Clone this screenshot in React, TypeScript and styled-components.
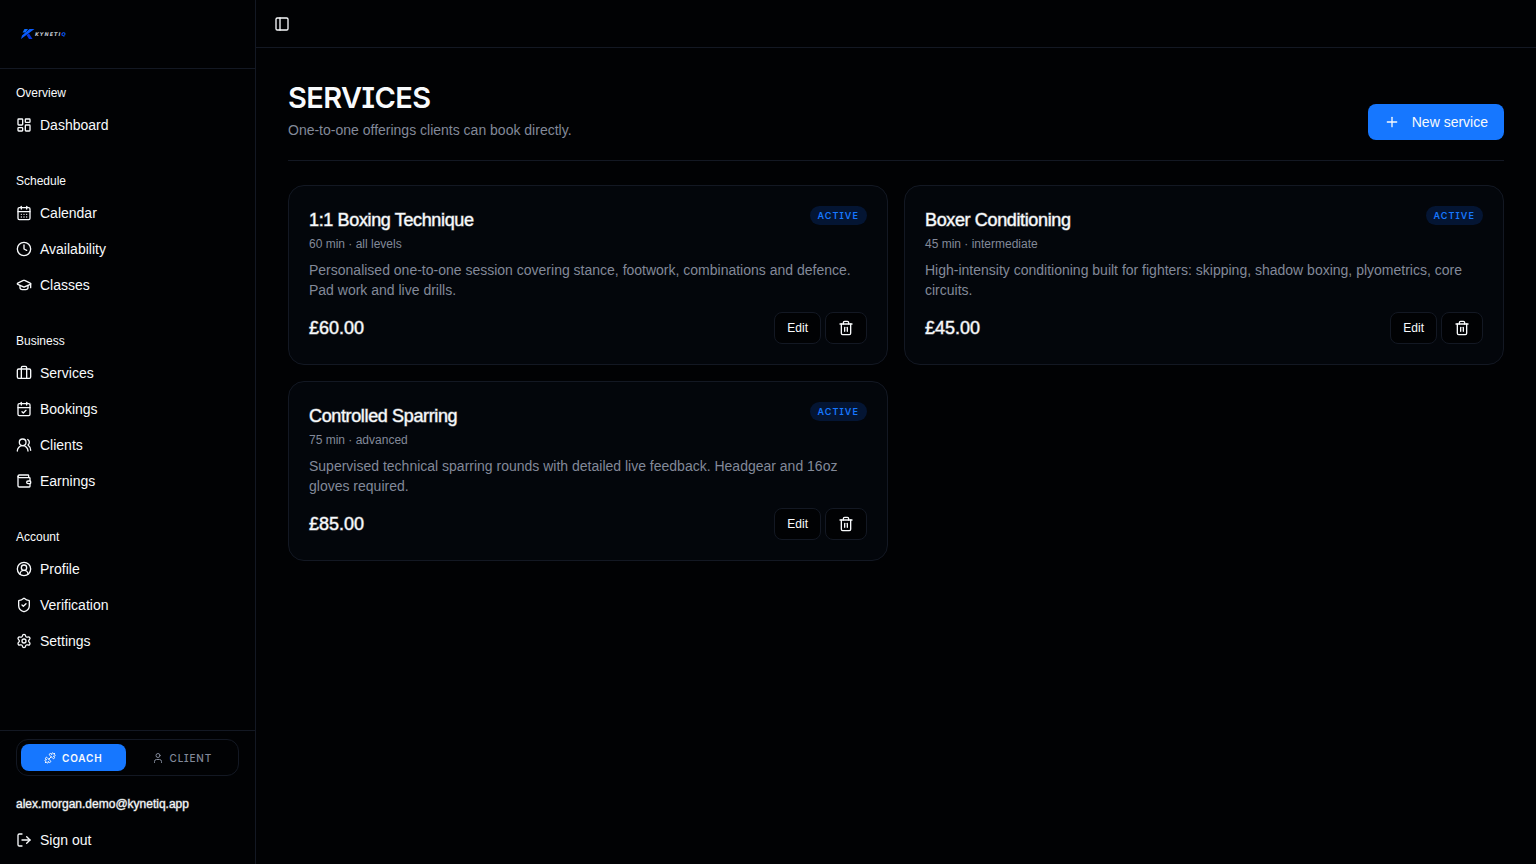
import React from "react";
import styled, { createGlobalStyle, css } from "styled-components";
import {
  Briefcase,
  CalendarCheck,
  CalendarDays,
  CircleUserRound,
  Clock,
  Dumbbell,
  GraduationCap,
  LayoutDashboard,
  LogOut,
  PanelLeft,
  Plus,
  Settings,
  ShieldCheck,
  Trash2,
  User,
  UsersRound,
  Wallet,
  type LucideIcon,
} from "lucide-react";

const color = {
  page: "#010204",
  card: "#03060b",
  line: "#131823",
  text: "#f8fafc",
  muted: "#828999",
  primary: "#1677ff",
};

const GlobalStyle = createGlobalStyle`
  *, *::before, *::after { box-sizing: border-box; }
  body {
    margin: 0;
    background: ${color.page};
    color: ${color.text};
    font: 14px/20px "Liberation Sans", Arial, sans-serif;
  }
  h1, h2, p, ul { margin: 0; padding: 0; }
  ul { list-style: none; }
  button { font: inherit; color: inherit; cursor: pointer; }
  a { color: inherit; text-decoration: none; }
`;

const display = css`
  font-family: Inter, sans-serif;
  font-feature-settings: "cv08";
`;

const semibold = css`
  -webkit-text-stroke: 1px rgba(248, 250, 252, 0.5);
`;

const Shell = styled.div`
  display: flex;
  min-height: 100vh;
`;

const Sidebar = styled.aside`
  display: flex;
  flex-direction: column;
  flex: 0 0 256px;
  border-right: 1px solid ${color.line};
`;

const Brand = styled.a`
  display: flex;
  align-items: center;
  height: 69px;
  padding: 0 16px;
  border-bottom: 1px solid ${color.line};
`;

const Nav = styled.nav`
  display: flex;
  flex: 1;
  flex-direction: column;
  gap: 8px;
`;

const Group = styled.section`
  padding: 8px;
`;

const GroupLabel = styled.h2`
  display: flex;
  align-items: center;
  height: 32px;
  padding: 0 8px;
  font-size: 12px;
  font-weight: 400;
`;

const Menu = styled.ul`
  display: grid;
  gap: 4px;
`;

const menuItem = css`
  display: flex;
  align-items: center;
  gap: 8px;
  width: 100%;
  height: 32px;
  padding: 0 8px;
  border: 0;
  border-radius: 6px;
  background: none;
`;

const MenuLink = styled.a`
  ${menuItem}
`;

const MenuButton = styled.button`
  ${menuItem}
`;

const SidebarFooter = styled.footer`
  padding: 8px;
  border-top: 1px solid ${color.line};
`;

const RoleSwitch = styled.div`
  display: grid;
  grid-template-columns: 1fr 1fr;
  gap: 4px;
  margin: 0 8px 8px;
  padding: 4px;
  border: 1px solid ${color.line};
  border-radius: 12px;
`;

const RoleButton = styled.button<{ $active?: boolean }>`
  ${display}
  display: flex;
  align-items: center;
  justify-content: center;
  gap: 6px;
  height: 27px;
  padding: 0;
  border: 0;
  border-radius: 8px;
  background: ${(p) => (p.$active ? color.primary : "transparent")};
  color: ${(p) => (p.$active ? color.text : color.muted)};
  font-size: 10px;
  font-weight: ${(p) => (p.$active ? 600 : 500)};
  letter-spacing: 0.08em;
`;

const Email = styled.p`
  padding: 12px 8px;
  font-size: 12px;
  line-height: 16px;
  -webkit-text-stroke: 1px rgba(248, 250, 252, 0.4);
`;

const Content = styled.div`
  flex: 1;
  min-width: 0;
`;

const TopBar = styled.header`
  display: flex;
  align-items: center;
  height: 48px;
  padding: 0 12px;
  border-bottom: 1px solid ${color.line};
`;

const PanelButton = styled.button`
  display: grid;
  place-items: center;
  width: 28px;
  height: 28px;
  padding: 0;
  border: 0;
  background: none;
`;

const Main = styled.main`
  padding: 32px;
`;

const PageHead = styled.div`
  display: flex;
  align-items: flex-end;
  justify-content: space-between;
  gap: 16px;
  margin-bottom: 24px;
  padding-bottom: 20px;
  border-bottom: 1px solid ${color.line};
`;

const PageTitle = styled.h1`
  ${display}
  font-size: 29px;
  line-height: 36px;
  font-weight: 600;
  letter-spacing: -0.02em;
`;

const Lead = styled.p`
  margin-top: 4px;
  color: ${color.muted};
`;

const PrimaryButton = styled.button`
  display: flex;
  align-items: center;
  gap: 12px;
  height: 36px;
  padding: 0 16px;
  border: 0;
  border-radius: 8px;
  background: ${color.primary};
`;

const Cards = styled.ul`
  display: grid;
  grid-template-columns: 1fr 1fr;
  gap: 16px;
`;

const Card = styled.li`
  padding: 20px;
  border: 1px solid ${color.line};
  border-radius: 16px;
  background: ${color.card};
`;

const CardHead = styled.div`
  display: flex;
  align-items: flex-start;
  justify-content: space-between;
  gap: 12px;
`;

const CardTitle = styled.h2`
  ${semibold}
  font-size: 18px;
  line-height: 28px;
  font-weight: 400;
  letter-spacing: -0.02em;
`;

const Meta = styled.p`
  margin-top: 2px;
  color: ${color.muted};
  font-size: 12px;
  line-height: 16px;
`;

const Badge = styled.span`
  ${display}
  padding: 2px 8px;
  border-radius: 10px;
  background: #041533;
  color: ${color.primary};
  font-size: 9px;
  line-height: 15px;
  font-weight: 600;
  letter-spacing: 0.12em;
`;

const Description = styled.p`
  margin-top: 8px;
  color: ${color.muted};
`;

const CardFoot = styled.div`
  display: flex;
  align-items: center;
  justify-content: space-between;
  margin-top: 12px;
`;

const Price = styled.span`
  ${semibold}
  font-size: 18px;
  line-height: 28px;
`;

const Actions = styled.div`
  display: flex;
  gap: 4px;
`;

const OutlineButton = styled.button`
  display: flex;
  align-items: center;
  height: 32px;
  padding: 0 12px;
  border: 1px solid ${color.line};
  border-radius: 8px;
  background: ${color.page};
  font-size: 12px;
`;

const groups: { label: string; items: [string, LucideIcon][] }[] = [
  { label: "Overview", items: [["Dashboard", LayoutDashboard]] },
  {
    label: "Schedule",
    items: [
      ["Calendar", CalendarDays],
      ["Availability", Clock],
      ["Classes", GraduationCap],
    ],
  },
  {
    label: "Business",
    items: [
      ["Services", Briefcase],
      ["Bookings", CalendarCheck],
      ["Clients", UsersRound],
      ["Earnings", Wallet],
    ],
  },
  {
    label: "Account",
    items: [
      ["Profile", CircleUserRound],
      ["Verification", ShieldCheck],
      ["Settings", Settings],
    ],
  },
];

const services = [
  {
    title: "1:1 Boxing Technique",
    meta: "60 min · all levels",
    text: "Personalised one-to-one session covering stance, footwork, combinations and defence. Pad work and live drills.",
    price: "£60.00",
  },
  {
    title: "Boxer Conditioning",
    meta: "45 min · intermediate",
    text: "High-intensity conditioning built for fighters: skipping, shadow boxing, plyometrics, core circuits.",
    price: "£45.00",
  },
  {
    title: "Controlled Sparring",
    meta: "75 min · advanced",
    text: "Supervised technical sparring rounds with detailed live feedback. Headgear and 16oz gloves required.",
    price: "£85.00",
  },
];

function Logo() {
  return (
    <svg width="56" height="20" viewBox="0 0 56 20" role="img" aria-label="Kynetiq">
      <path d="M8.500 5h3.500L9.500 8.500H6.500z" fill="#0a6cff" />
      <path d="M13.500 5h5L11 10.500 5 15l1-3.500z" fill="#0a5cff" />
      <path d="M10.500 11l2.500-1.500 3.500 5.500h-3.500z" fill="#0636e0" />
      <text
        x="19"
        y="12"
        fill="#c4c9d2"
        fontFamily="DejaVu Sans, sans-serif"
        fontSize="5"
        fontStyle="italic"
        fontWeight="700"
        letterSpacing="1"
      >
        KYNETI<tspan fill="#0a5cff">Q</tspan>
      </text>
    </svg>
  );
}

export default function App() {
  return (
    <>
      <GlobalStyle />
      <Shell>
        <Sidebar>
          <Brand href="#home">
            <Logo />
          </Brand>
          <Nav aria-label="Main">
            {groups.map((group) => (
              <Group key={group.label}>
                <GroupLabel>{group.label}</GroupLabel>
                <Menu>
                  {group.items.map(([name, Icon]) => (
                    <li key={name}>
                      <MenuLink href={`#${name.toLowerCase()}`}>
                        <Icon size={16} />
                        {name}
                      </MenuLink>
                    </li>
                  ))}
                </Menu>
              </Group>
            ))}
          </Nav>
          <SidebarFooter>
            <RoleSwitch>
              <RoleButton $active aria-pressed="true">
                <Dumbbell size={12} />
                COACH
              </RoleButton>
              <RoleButton aria-pressed="false">
                <User size={12} />
                CLIENT
              </RoleButton>
            </RoleSwitch>
            <Email>alex.morgan.demo@kynetiq.app</Email>
            <MenuButton>
              <LogOut size={16} />
              Sign out
            </MenuButton>
          </SidebarFooter>
        </Sidebar>
        <Content>
          <TopBar>
            <PanelButton aria-label="Toggle sidebar">
              <PanelLeft size={16} />
            </PanelButton>
          </TopBar>
          <Main>
            <PageHead>
              <div>
                <PageTitle>SERVICES</PageTitle>
                <Lead>One-to-one offerings clients can book directly.</Lead>
              </div>
              <PrimaryButton>
                <Plus size={16} />
                New service
              </PrimaryButton>
            </PageHead>
            <Cards>
              {services.map((service) => (
                <Card key={service.title}>
                  <CardHead>
                    <div>
                      <CardTitle>{service.title}</CardTitle>
                      <Meta>{service.meta}</Meta>
                    </div>
                    <Badge>ACTIVE</Badge>
                  </CardHead>
                  <Description>{service.text}</Description>
                  <CardFoot>
                    <Price>{service.price}</Price>
                    <Actions>
                      <OutlineButton>Edit</OutlineButton>
                      <OutlineButton aria-label={`Delete ${service.title}`}>
                        <Trash2 size={16} />
                      </OutlineButton>
                    </Actions>
                  </CardFoot>
                </Card>
              ))}
            </Cards>
          </Main>
        </Content>
      </Shell>
    </>
  );
}
